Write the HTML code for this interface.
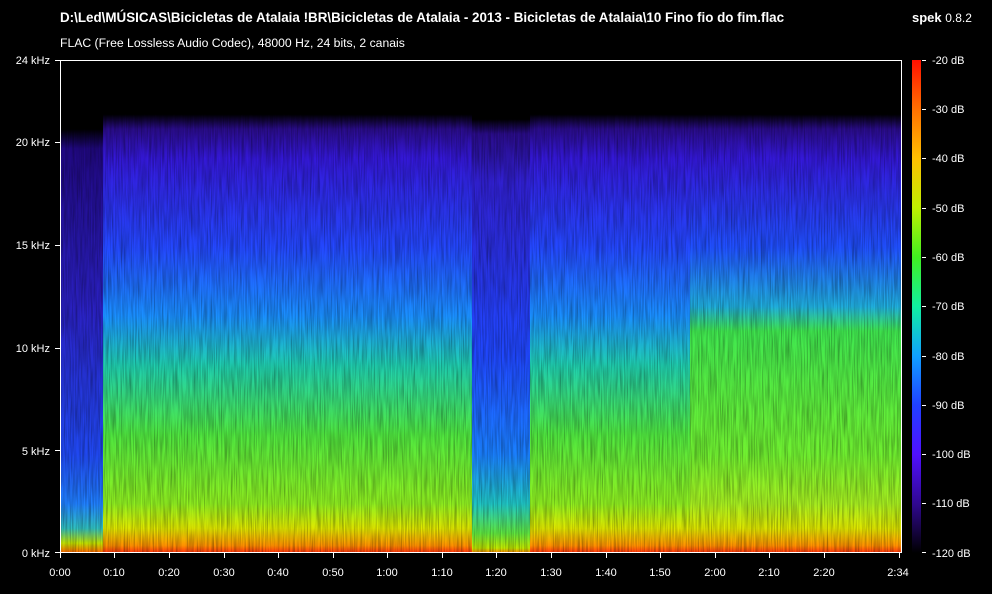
<!DOCTYPE html>
<html><head><meta charset="utf-8"><style>
body{margin:0;background:#000;width:992px;height:594px;overflow:hidden;font-family:"Liberation Sans",sans-serif;color:#fff}
svg{position:absolute;left:0;top:0}
</style></head><body>
<svg width="992" height="594" xmlns="http://www.w3.org/2000/svg" font-family="Liberation Sans, sans-serif" fill="#fff">
<defs>
<linearGradient id="main" x1="0" y1="60" x2="0" y2="553" gradientUnits="userSpaceOnUse">
<stop offset="0" stop-color="#000"/><stop offset="0.11" stop-color="#000"/>
<stop offset="0.14" stop-color="#2a0c8a"/><stop offset="0.2" stop-color="#3418d8"/>
<stop offset="0.38" stop-color="#2448ff"/><stop offset="0.52" stop-color="#1a90ff"/>
<stop offset="0.62" stop-color="#20d0b0"/><stop offset="0.76" stop-color="#50e840"/>
<stop offset="0.9" stop-color="#90f020"/><stop offset="0.95" stop-color="#e0e800"/>
<stop offset="0.985" stop-color="#ff9000"/><stop offset="1" stop-color="#ff3010"/>
</linearGradient>
<linearGradient id="right" x1="0" y1="60" x2="0" y2="553" gradientUnits="userSpaceOnUse">
<stop offset="0" stop-color="#000"/><stop offset="0.11" stop-color="#000"/>
<stop offset="0.14" stop-color="#2a0c8a"/><stop offset="0.2" stop-color="#3418d8"/>
<stop offset="0.38" stop-color="#2050ff"/><stop offset="0.5" stop-color="#20b0e0"/>
<stop offset="0.55" stop-color="#40e850"/><stop offset="0.8" stop-color="#70f030"/>
<stop offset="0.9" stop-color="#a8f020"/><stop offset="0.95" stop-color="#e0e800"/>
<stop offset="0.985" stop-color="#ff9000"/><stop offset="1" stop-color="#ff3010"/>
</linearGradient>
<linearGradient id="quiet" x1="0" y1="60" x2="0" y2="553" gradientUnits="userSpaceOnUse">
<stop offset="0" stop-color="#000"/><stop offset="0.12" stop-color="#000"/>
<stop offset="0.15" stop-color="#2a0c8a"/><stop offset="0.25" stop-color="#3020d0"/>
<stop offset="0.6" stop-color="#2048ff"/><stop offset="0.8" stop-color="#1a80ff"/>
<stop offset="0.9" stop-color="#20c8c8"/><stop offset="0.96" stop-color="#60e840"/>
<stop offset="0.99" stop-color="#c0e800"/><stop offset="1" stop-color="#ff8000"/>
</linearGradient>
<linearGradient id="left" x1="0" y1="60" x2="0" y2="553" gradientUnits="userSpaceOnUse">
<stop offset="0" stop-color="#000"/><stop offset="0.14" stop-color="#000"/>
<stop offset="0.18" stop-color="#200880"/><stop offset="0.5" stop-color="#2a20c0"/>
<stop offset="0.8" stop-color="#2048f0"/><stop offset="0.9" stop-color="#2080ff"/>
<stop offset="0.95" stop-color="#30c0c0"/><stop offset="0.98" stop-color="#c0e000"/>
<stop offset="1" stop-color="#ff6000"/>
</linearGradient>
<linearGradient id="cb" x1="0" y1="60" x2="0" y2="553" gradientUnits="userSpaceOnUse">
<stop offset="0" stop-color="#ff1000"/><stop offset="0.1" stop-color="#ff7000"/>
<stop offset="0.2" stop-color="#ffc000"/><stop offset="0.3" stop-color="#c0f000"/>
<stop offset="0.4" stop-color="#40f020"/><stop offset="0.5" stop-color="#10f0a0"/>
<stop offset="0.6" stop-color="#10a0ff"/><stop offset="0.7" stop-color="#2040ff"/>
<stop offset="0.8" stop-color="#5010ff"/><stop offset="0.9" stop-color="#300890"/>
<stop offset="1" stop-color="#000"/>
</linearGradient>
<filter id="n" x="0" y="0" width="1" height="1">
<feTurbulence type="fractalNoise" baseFrequency="0.7 0.03" numOctaves="2" seed="3"/>
<feColorMatrix values="0 0 0 0 0  0 0 0 0 0  0 0 0 0 0  1.6 0 0 0 -0.55"/>
</filter>
</defs>
<text x="60" y="22" font-size="13.4" font-weight="bold">D:\Led\MÚSICAS\Bicicletas de Atalaia !BR\Bicicletas de Atalaia - 2013 - Bicicletas de Atalaia\10 Fino fio do fim.flac</text>
<text x="912" y="22" font-size="13" font-weight="bold">spek <tspan font-weight="normal" font-size="12">0.8.2</tspan></text>
<text x="60" y="47" font-size="12.2">FLAC (Free Lossless Audio Codec), 48000 Hz, 24 bits, 2 canais</text>

<rect x="61" y="60" width="841" height="493" fill="url(#main)"/>
<rect x="61" y="60" width="42" height="493" fill="url(#left)"/>
<rect x="472" y="60" width="58" height="493" fill="url(#quiet)"/>
<rect x="690" y="60" width="212" height="493" fill="url(#right)"/>
<rect x="61" y="60" width="841" height="493" filter="url(#n)" opacity="0.4"/>
<path d="M60.5 60V552.5H901.5V60" stroke="#fff" fill="none"/>
<line x1="60" y1="60.5" x2="902" y2="60.5" stroke="#fff"/>

<g font-size="11" text-anchor="end">
<text x="50" y="64">24 kHz</text><text x="50" y="146">20 kHz</text>
<text x="50" y="249">15 kHz</text><text x="50" y="352">10 kHz</text>
<text x="50" y="455">5 kHz</text><text x="50" y="557">0 kHz</text>
</g>
<g stroke="#fff">
<path d="M55 60.5h5M55 142.5h5M55 245.5h5M55 348.5h5M55 450.5h5M55 552.5h5"/>
<path d="M60.5 553v5M114.5 553v5M169.5 553v5M224.5 553v5M278.5 553v5M333.5 553v5M387.5 553v5M442.5 553v5M496.5 553v5M551.5 553v5M606.5 553v5M660.5 553v5M715.5 553v5M769.5 553v5M824.5 553v5M899.5 553v5"/>
<path d="M922 60.5h4M922 109.5h4M922 158.5h4M922 208.5h4M922 257.5h4M922 306.5h4M922 356.5h4M922 405.5h4M922 454.5h4M922 503.5h4M922 552.5h4"/>
</g>
<g font-size="11" text-anchor="middle">
<text x="60" y="576">0:00</text><text x="114" y="576">0:10</text><text x="169" y="576">0:20</text>
<text x="224" y="576">0:30</text><text x="278" y="576">0:40</text><text x="333" y="576">0:50</text>
<text x="387" y="576">1:00</text><text x="442" y="576">1:10</text><text x="496" y="576">1:20</text>
<text x="551" y="576">1:30</text><text x="606" y="576">1:40</text><text x="660" y="576">1:50</text>
<text x="715" y="576">2:00</text><text x="769" y="576">2:10</text><text x="824" y="576">2:20</text>
<text x="898" y="576">2:34</text>
</g>
<rect x="912" y="60" width="9" height="493" fill="url(#cb)"/>
<g font-size="11">
<text x="932" y="64">-20 dB</text><text x="932" y="113">-30 dB</text><text x="932" y="162">-40 dB</text>
<text x="932" y="212">-50 dB</text><text x="932" y="261">-60 dB</text><text x="932" y="310">-70 dB</text>
<text x="932" y="360">-80 dB</text><text x="932" y="409">-90 dB</text><text x="932" y="458">-100 dB</text>
<text x="932" y="507">-110 dB</text><text x="932" y="557">-120 dB</text>
</g>
</svg>
</body></html>
